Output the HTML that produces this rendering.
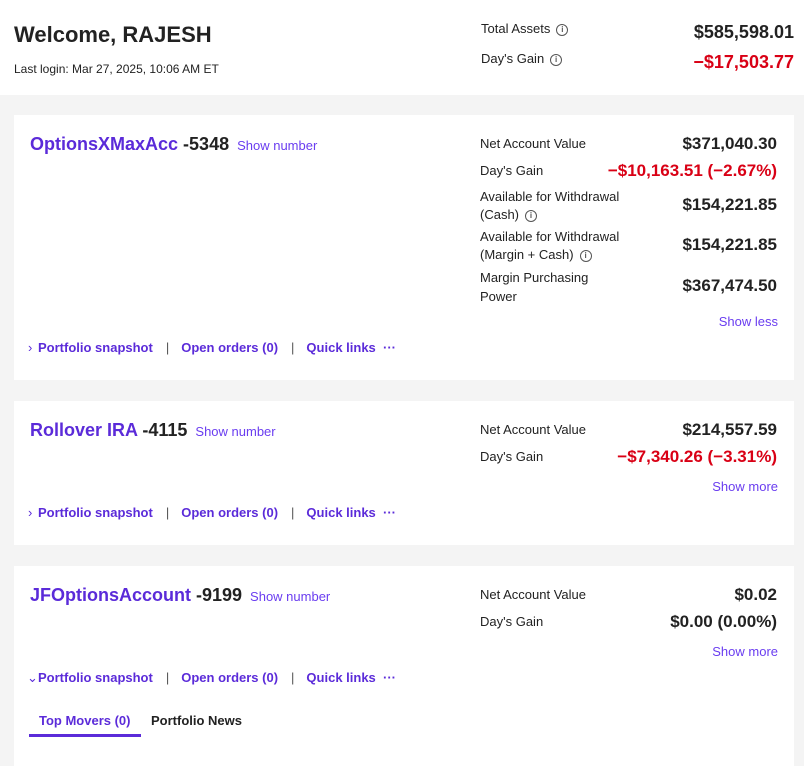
<!DOCTYPE html>
<html><head><meta charset="utf-8"><style>
*{margin:0;padding:0;box-sizing:border-box}
body{width:804px;height:745px;overflow:hidden;background:#f4f4f4;font-family:"Liberation Sans",sans-serif;color:#222;position:relative}
.a{position:absolute;white-space:nowrap}
.hdr{position:absolute;left:0;top:0;width:804px;height:95px;background:#fff}
.card{position:absolute;left:14px;width:780px;background:#fff}
.lbl{font-size:13px;color:#222}
.val{font-size:17px;font-weight:bold;color:#222;text-align:right;right:17px}
.red{color:#d90015}
.nm{font-size:18px;font-weight:bold;color:#5b2bd9}
.nm .num{color:#222}
.nm .sn{font-size:13px;color:#6a3df0;font-weight:normal;margin-left:8px}
.lk{font-size:13px;font-weight:bold;color:#5b2bd9}
.lk .ch{display:inline-block;width:10px;font-weight:normal}
.lk .sep{color:#555;font-weight:normal;margin:0 12px 0 13px}
.sm{font-size:13px;color:#6a3df0;right:16px}
.i{display:inline-block;width:12px;height:12px;border:1px solid #555;border-radius:50%;font-size:8px;line-height:10px;text-align:center;color:#555;margin-left:6px;vertical-align:1px;font-weight:bold}
</style></head><body>
<div class="hdr">
<div class="a" style="left:14px;top:22px;font-size:22px;font-weight:bold;color:#222">Welcome, RAJESH</div>
<div class="a" style="left:14px;top:62px;font-size:12px">Last login: Mar 27, 2025, 10:06 AM ET</div>
<div class="a lbl" style="left:481px;top:21px">Total Assets<span class="i">i</span></div>
<div class="a lbl" style="left:481px;top:51px">Day's Gain<span class="i">i</span></div>
<div class="a val" style="right:10px;top:22px;font-size:18px">$585,598.01</div>
<div class="a val red" style="right:10px;top:52px;font-size:18px">−$17,503.77</div>
</div>

<div class="card" style="top:115px;height:265px">
<div class="a nm" style="left:16px;top:19px">OptionsXMaxAcc <span class="num">-5348</span><span class="sn">Show number</span></div>
<div class="a lbl" style="left:466px;top:21px">Net Account Value</div>
<div class="a val" style="top:19px">$371,040.30</div>
<div class="a lbl" style="left:466px;top:48px">Day's Gain</div>
<div class="a val red" style="top:46px">−$10,163.51 (−2.67%)</div>
<div class="a lbl" style="left:466px;top:73px;line-height:18px">Available for Withdrawal<br>(Cash)<span class="i">i</span></div>
<div class="a val" style="top:80px">$154,221.85</div>
<div class="a lbl" style="left:466px;top:113px;line-height:18px">Available for Withdrawal<br>(Margin + Cash)<span class="i">i</span></div>
<div class="a val" style="top:120px">$154,221.85</div>
<div class="a lbl" style="left:466px;top:153px;line-height:19px">Margin Purchasing<br>Power</div>
<div class="a val" style="top:161px">$367,474.50</div>
<div class="a sm" style="top:199px">Show less</div>
<div class="a lk" style="left:14px;top:225px"><span class="ch">›</span>Portfolio snapshot<span class="sep">|</span>Open orders (0)<span class="sep">|</span>Quick links &nbsp;···</div>
</div>

<div class="card" style="top:401px;height:144px">
<div class="a nm" style="left:16px;top:19px">Rollover IRA <span class="num">-4115</span><span class="sn">Show number</span></div>
<div class="a lbl" style="left:466px;top:21px">Net Account Value</div>
<div class="a val" style="top:19px">$214,557.59</div>
<div class="a lbl" style="left:466px;top:48px">Day's Gain</div>
<div class="a val red" style="top:46px">−$7,340.26 (−3.31%)</div>
<div class="a sm" style="top:78px">Show more</div>
<div class="a lk" style="left:14px;top:104px"><span class="ch">›</span>Portfolio snapshot<span class="sep">|</span>Open orders (0)<span class="sep">|</span>Quick links &nbsp;···</div>
</div>

<div class="card" style="top:566px;height:200px">
<div class="a nm" style="left:16px;top:19px">JFOptionsAccount <span class="num">-9199</span><span class="sn">Show number</span></div>
<div class="a lbl" style="left:466px;top:21px">Net Account Value</div>
<div class="a val" style="top:19px">$0.02</div>
<div class="a lbl" style="left:466px;top:48px">Day's Gain</div>
<div class="a val" style="top:46px">$0.00 (0.00%)</div>
<div class="a sm" style="top:78px">Show more</div>
<div class="a lk" style="left:13px;top:104px"><span class="ch" style="width:11px">⌄</span>Portfolio snapshot<span class="sep">|</span>Open orders (0)<span class="sep">|</span>Quick links &nbsp;···</div>
<div class="a lk" style="left:25px;top:147px">Top Movers (0)</div>
<div class="a" style="left:137px;top:147px;font-size:13px;font-weight:bold;color:#222">Portfolio News</div>
<div class="a" style="left:15px;top:168px;width:112px;height:3px;background:#5b2bd9"></div>
</div>
</body></html>
